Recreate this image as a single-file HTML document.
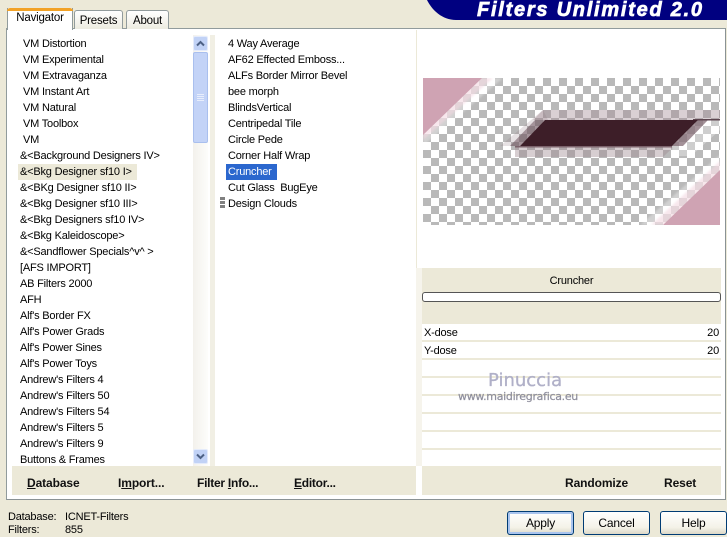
<!DOCTYPE html>
<html><head><meta charset="utf-8">
<style>
html,body{margin:0;padding:0}
body{width:727px;height:536px;overflow:hidden;background:#ece9d8;position:relative;font:11px/16px "Liberation Sans",sans-serif;letter-spacing:-.2px;color:#000}
.a{position:absolute}
.l{white-space:pre}
.list{position:absolute;overflow:hidden;background:#fff}
.list div{height:16px;line-height:16px;white-space:pre}
.tab{position:absolute;background:linear-gradient(#fff,#ecebe0);border:1px solid #919b9c;border-bottom:0;border-radius:3px 3px 0 0;text-align:center;box-sizing:border-box}
.bt{position:absolute;font-weight:bold;font-size:12px;line-height:16px;color:#111;white-space:pre;letter-spacing:-.1px}
.btn{position:absolute;top:511px;height:24px;box-sizing:border-box;border:1px solid #003c74;border-radius:3px;background:linear-gradient(#fff,#f4f2e8 70%,#dcd8c8);text-align:center;line-height:22px;font-size:12px;letter-spacing:-.2px}
.sep{position:absolute;left:422px;width:299px;height:2px;background:#ece9d8}
</style></head>
<body>
<!-- banner -->
<svg class="a" style="left:420px;top:0" width="307" height="21"><path d="M7 0H307V20H36C22 20 12 10 7 0Z" fill="#000080"/></svg>
<div class="a l" style="left:477px;top:0;font:italic bold 20px/20px 'Liberation Sans',sans-serif;letter-spacing:1.75px;color:#fff;-webkit-text-stroke:.7px #fff">Filters Unlimited 2.0</div>
<!-- panel -->
<div class="a" style="left:6px;top:28px;width:718px;height:470px;background:#fff;border:1px solid #919b9c;border-right-color:#8a9294;border-bottom-color:#8a9294"></div>
<!-- tabs -->
<div class="tab" style="left:74px;top:10px;width:49px;height:19px;line-height:20px;font-size:11.5px">Presets</div>
<div class="tab" style="left:126px;top:10px;width:43px;height:19px;line-height:20px;font-size:11.5px">About</div>
<div class="a" style="left:7px;top:8px;width:66px;height:22px;background:#fff;border-left:1px solid #919b9c;border-right:1px solid #919b9c;box-sizing:border-box;text-align:center;line-height:21px;font-size:11.5px"><div style="position:absolute;left:-1px;right:-1px;top:0;height:3px;background:#f2a226;border-radius:3px 3px 0 0"></div><span style="position:relative;top:0">Navigator</span></div>
<!-- left list -->
<div class="list" style="left:12px;top:36px;width:181px;height:430px;padding-left:8px;box-sizing:border-box">
<div style="padding-left:3px">VM Distortion</div>
<div style="padding-left:3px">VM Experimental</div>
<div style="padding-left:3px">VM Extravaganza</div>
<div style="padding-left:3px">VM Instant Art</div>
<div style="padding-left:3px">VM Natural</div>
<div style="padding-left:3px">VM Toolbox</div>
<div style="padding-left:3px">VM</div>
<div>&amp;&lt;Background Designers IV&gt;</div>
<div><span style="background:#ece9d8;display:inline-block;margin-left:-2px;padding:0 4px 0 2px;width:113px">&amp;&lt;Bkg Designer sf10 I&gt;</span></div>
<div>&amp;&lt;BKg Designer sf10 II&gt;</div>
<div>&amp;&lt;Bkg Designer sf10 III&gt;</div>
<div>&amp;&lt;Bkg Designers sf10 IV&gt;</div>
<div>&amp;&lt;Bkg Kaleidoscope&gt;</div>
<div>&amp;&lt;Sandflower Specials^v^ &gt;</div>
<div>[AFS IMPORT]</div>
<div>AB Filters 2000</div>
<div>AFH</div>
<div>Alf's Border FX</div>
<div>Alf's Power Grads</div>
<div>Alf's Power Sines</div>
<div>Alf's Power Toys</div>
<div>Andrew's Filters 4</div>
<div>Andrew's Filters 50</div>
<div>Andrew's Filters 54</div>
<div>Andrew's Filters 5</div>
<div>Andrew's Filters 9</div>
<div>Buttons &amp; Frames</div>
</div>
<!-- scrollbar -->
<div class="a" style="left:193px;top:35px;width:15px;height:431px;background:linear-gradient(90deg,#f3f1ec,#fdfdfb)"></div>
<div class="a" style="left:193px;top:36px;width:15px;height:15px;box-sizing:border-box;background:#c1d2f6;border:1px solid #e4ebfb;border-radius:2px"></div>
<svg class="a" style="left:193px;top:36px" width="15" height="15"><path d="M4 9.5L7.5 6L11 9.5" fill="none" stroke="#4d6185" stroke-width="2"/></svg>
<div class="a" style="left:193px;top:52px;width:15px;height:91px;box-sizing:border-box;background:#c3d3f7;border:1px solid #a9bfee;border-radius:2px"></div>
<svg class="a" style="left:193px;top:92px" width="15" height="10"><path d="M4 2.5H11M4 4.5H11M4 6.5H11M4 8.5H11" stroke="#e8eefc" stroke-width="1"/></svg>
<div class="a" style="left:193px;top:449px;width:15px;height:15px;box-sizing:border-box;background:#c1d2f6;border:1px solid #e4ebfb;border-radius:2px"></div>
<svg class="a" style="left:193px;top:449px" width="15" height="15"><path d="M4 5.5L7.5 9L11 5.5" fill="none" stroke="#4d6185" stroke-width="2"/></svg>
<div class="a" style="left:210px;top:35px;width:5px;height:431px;background:#f1efe4"></div>
<!-- middle list -->
<div class="list" style="left:215px;top:36px;width:201px;height:430px;padding-left:13px;box-sizing:border-box">
<div>4 Way Average</div>
<div>AF62 Effected Emboss...</div>
<div>ALFs Border Mirror Bevel</div>
<div>bee morph</div>
<div>BlindsVertical</div>
<div>Centripedal Tile</div>
<div>Circle Pede</div>
<div>Corner Half Wrap</div>
<div><span style="display:inline-block;background:#2b67ce;color:#fff;margin-left:-2px;padding-left:2px;width:49px">Cruncher</span></div>
<div>Cut Glass  BugEye</div>
<div>Design Clouds</div>
</div>
<div class="a" style="left:220px;top:197px;width:5px;height:3px;background:#808080"></div>
<div class="a" style="left:220px;top:201px;width:5px;height:3px;background:#808080"></div>
<div class="a" style="left:220px;top:205px;width:5px;height:3px;background:#808080"></div>
<div class="a" style="left:416px;top:30px;width:1px;height:238px;background:#ece9d8"></div>
<div class="a" style="left:416px;top:268px;width:6px;height:198px;background:#f6f4ec"></div>
<!-- preview -->
<svg class="a" style="left:423px;top:78px" width="297" height="147" viewBox="0 0 297 147">
<defs><pattern id="c" width="16" height="16" patternUnits="userSpaceOnUse"><rect width="16" height="16" fill="#fff"/><rect x="8" y="0" width="8" height="8" fill="#b9b9b9"/><rect x="0" y="8" width="8" height="8" fill="#b9b9b9"/></pattern><filter id="b" x="-5%" y="-5%" width="110%" height="110%"><feGaussianBlur stdDeviation="1"/></filter></defs>
<rect width="297" height="147" fill="url(#c)"/>
<path d="M0 0H80L0 68Z" fill="#fff" opacity=".35" filter="url(#b)"/>
<path d="M0 0H70L0 62Z" fill="#f3d8e1" opacity=".6" filter="url(#b)"/>
<path d="M0 0H59L0 57Z" fill="#cfa3b3"/>
<path d="M297 147H217L297 77Z" fill="#fff" opacity=".35" filter="url(#b)"/>
<path d="M297 147H228L297 83Z" fill="#f3d8e1" opacity=".6" filter="url(#b)"/>
<path d="M297 147H240L297 92Z" fill="#cfa3b3"/>
<path d="M120 32H297V42H110Z" fill="#a88f98" opacity=".42"/>
<path d="M92 69.5H250L240 79H92Z" fill="#a08a92" opacity=".42"/>
<path d="M77 68L120 32L125 42L97 68Z" fill="#8d7880" opacity=".22"/>
<path d="M87 68L112 42H122L97 68Z" fill="#6f5560" opacity=".55"/>
<path d="M249 68L275 42H297V52L268 78H250Z" fill="#fff" opacity=".3"/>
<path d="M249 68L275 42H285L260 68Z" fill="#7c636c" opacity=".7"/>
<rect x="270" y="41" width="27" height="1.5" fill="#5e4650"/>
<rect x="92" y="68" width="157" height="1.5" fill="#7c636c"/>
<path d="M122 42H275L249 68H97Z" fill="#3d1e28"/>
</svg>
<!-- right panel -->
<div class="a" style="left:422px;top:268px;width:299px;height:56px;background:#ece9d8"></div>
<div class="a" style="left:422px;top:273px;width:299px;text-align:center;line-height:16px">Cruncher</div>
<div class="a" style="left:422px;top:292px;width:299px;height:10px;box-sizing:border-box;background:#fff;border:1px solid #555;border-radius:3px"></div>
<div class="a l" style="left:424px;top:325px">X-dose</div>
<div class="a l" style="left:424px;top:343px">Y-dose</div>
<div class="a l" style="left:690px;top:325px;width:29px;text-align:right">20</div>
<div class="a l" style="left:690px;top:343px;width:29px;text-align:right">20</div>
<div class="sep" style="top:340px"></div>
<div class="sep" style="top:358px"></div>
<div class="sep" style="top:376px"></div>
<div class="sep" style="top:394px"></div>
<div class="sep" style="top:412px"></div>
<div class="sep" style="top:430px"></div>
<div class="sep" style="top:448px"></div>
<!-- watermark -->
<div class="a l" style="left:488px;top:371px;font:18px/20px 'DejaVu Sans',sans-serif;color:#b0b0c8;letter-spacing:0;-webkit-text-stroke:.3px #b0b0c8">Pinuccia</div>
<div class="a l" style="left:458px;top:390px;font:11px/14px 'DejaVu Sans',sans-serif;color:#8e8e9c;letter-spacing:-.3px;-webkit-text-stroke:.2px #8e8e9c">www.maidiregrafica.eu</div>
<!-- bottom bars -->
<div class="a" style="left:12px;top:466px;width:404px;height:29px;background:#ece9d8"></div>
<div class="a" style="left:422px;top:466px;width:299px;height:29px;background:#ece9d8"></div>
<div class="bt" style="left:27px;top:475px"><u>D</u>atabase</div>
<div class="bt" style="left:118px;top:475px">I<u>m</u>port...</div>
<div class="bt" style="left:197px;top:475px;letter-spacing:-.25px">Filter <u>I</u>nfo...</div>
<div class="bt" style="left:294px;top:475px;letter-spacing:-.25px"><u>E</u>ditor...</div>
<div class="bt" style="left:565px;top:475px">Randomize</div>
<div class="bt" style="left:664px;top:475px">Reset</div>
<!-- status -->
<div class="a l" style="left:8px;top:511px;line-height:13px">Database:
Filters:</div>
<div class="a l" style="left:65px;top:511px;line-height:13px">ICNET-Filters
855</div>
<!-- buttons -->
<div class="btn" style="left:507px;width:67px;box-shadow:inset 0 0 0 2px #a9c4ee">Apply</div>
<div class="btn" style="left:583px;width:67px">Cancel</div>
<div class="btn" style="left:660px;width:67px">Help</div>
</body></html>
